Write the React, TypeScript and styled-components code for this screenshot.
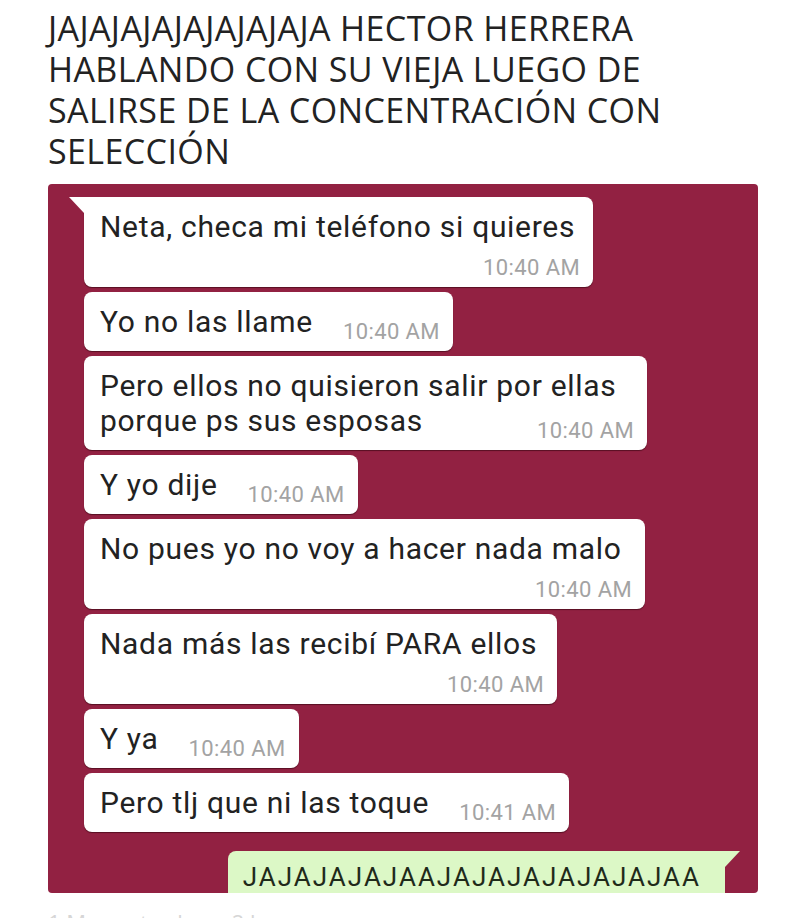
import React from "react";
import styled, { createGlobalStyle, css } from "styled-components";

const GlobalStyle = createGlobalStyle`
  html, body {
    margin: 0;
    padding: 0;
    background: #ffffff;
  }
  body {
    width: 803px;
    height: 918px;
    overflow: hidden;
  }
`;

interface Message {
  lines: string[];
  time: string;
  timeOwnRow?: boolean;
  tail?: boolean;
  minWidth?: number;
}

const messages: Message[] = [
  { lines: ["Neta, checa mi teléfono si quieres"], time: "10:40 AM", timeOwnRow: true, tail: true, minWidth: 509 },
  { lines: ["Yo no las llame"], time: "10:40 AM" },
  { lines: ["Pero ellos no quisieron salir por ellas", "porque ps sus esposas"], time: "10:40 AM", minWidth: 563 },
  { lines: ["Y yo dije"], time: "10:40 AM" },
  { lines: ["No pues yo no voy a hacer nada malo"], time: "10:40 AM", timeOwnRow: true, minWidth: 561 },
  { lines: ["Nada más las recibí PARA ellos"], time: "10:40 AM", timeOwnRow: true, minWidth: 473 },
  { lines: ["Y ya"], time: "10:40 AM" },
  { lines: ["Pero tlj que ni las toque"], time: "10:41 AM" },
];

export default function App() {
  return (
    <Page>
      <GlobalStyle />
      <Title>
        JAJAJAJAJAJAJAJAJA HECTOR HERRERA HABLANDO CON SU VIEJA LUEGO DE
        SALIRSE DE LA CONCENTRACIÓN CON SELECCIÓN
      </Title>
      <ChatPanel>
        {messages.map((m, i) => (
          <Bubble key={i} $tail={m.tail} $minWidth={m.minWidth}>
            {m.lines.map((line, j) => {
              const isLast = j === m.lines.length - 1;
              if (isLast && !m.timeOwnRow) {
                return (
                  <LastLine key={j}>
                    <MsgText>{line}</MsgText>
                    <Time>{m.time}</Time>
                  </LastLine>
                );
              }
              return <MsgText key={j}>{line}</MsgText>;
            })}
            {m.timeOwnRow && <Time $ownRow>{m.time}</Time>}
          </Bubble>
        ))}
        <OutRow>
          <OutBubble>JAJAJAJAJAAJAJAJAJAJAJAJAA</OutBubble>
        </OutRow>
      </ChatPanel>
      <Footer>1 Me gusta · hace 2 horas</Footer>
    </Page>
  );
}

const Page = styled.div`
  display: flex;
  flex-direction: column;
  padding: 8px 0 0 48px;
`;

const Title = styled.h1`
  margin: 0;
  width: 660px;
  font-family: "Open Sans", "Liberation Sans", sans-serif;
  font-weight: 400;
  font-size: 34px;
  line-height: 41px;
  letter-spacing: 0.4px;
  color: #222222;
`;

const ChatPanel = styled.div`
  margin-top: 12px;
  width: 710px;
  height: 709px;
  box-sizing: border-box;
  padding: 13px 0 0 36px;
  background: #922142;
  border-radius: 4px;
  overflow: hidden;
  display: flex;
  flex-direction: column;
  align-items: flex-start;
  gap: 5px;
`;

const Bubble = styled.div<{ $tail?: boolean; $minWidth?: number }>`
  position: relative;
  box-sizing: border-box;
  display: flex;
  flex-direction: column;
  min-width: ${({ $minWidth }) => ($minWidth ? `${$minWidth}px` : "0")};
  background: #ffffff;
  border-radius: 8px;
  padding: 12px 13px 12px 16px;
  box-shadow: 0 1px 1px rgba(40, 0, 10, 0.55);
  ${({ $tail }) =>
    $tail &&
    css`
      border-top-left-radius: 0;
      &::before {
        content: "";
        position: absolute;
        top: 0;
        left: -15px;
        border-top: 16px solid #ffffff;
        border-left: 15px solid transparent;
      }
    `}
`;

const MsgText = styled.div`
  font-family: Roboto, "Liberation Sans", sans-serif;
  font-size: 30px;
  line-height: 35px;
  letter-spacing: 0.7px;
  color: #222222;
  white-space: nowrap;
`;

const LastLine = styled.div`
  display: flex;
  align-items: flex-end;
  justify-content: space-between;
  gap: 30px;
`;

const Time = styled.span<{ $ownRow?: boolean }>`
  font-family: Roboto, "Liberation Sans", sans-serif;
  font-size: 22px;
  line-height: 24px;
  letter-spacing: 0.4px;
  color: #a3a3a3;
  white-space: nowrap;
  margin-bottom: -5px;
  ${({ $ownRow }) =>
    $ownRow &&
    css`
      align-self: flex-end;
      margin-top: 12px;
    `}
`;

const OutRow = styled.div`
  align-self: stretch;
  display: flex;
  justify-content: flex-end;
  padding-right: 33px;
  margin-top: 14px;
`;

const OutBubble = styled.div`
  position: relative;
  background: #dcf8c6;
  border-radius: 8px;
  border-top-right-radius: 0;
  padding: 9px 24px 14px 15px;
  font-family: Roboto, "Liberation Sans", sans-serif;
  font-size: 26px;
  line-height: 34px;
  letter-spacing: 2px;
  color: #1f2a1a;
  white-space: nowrap;
  &::after {
    content: "";
    position: absolute;
    top: 0;
    right: -15px;
    border-top: 16px solid #dcf8c6;
    border-right: 15px solid transparent;
  }
`;

const Footer = styled.div`
  margin-top: 14px;
  font-family: "Open Sans", "Liberation Sans", sans-serif;
  font-size: 22px;
  color: #d6d6d6;
`;
